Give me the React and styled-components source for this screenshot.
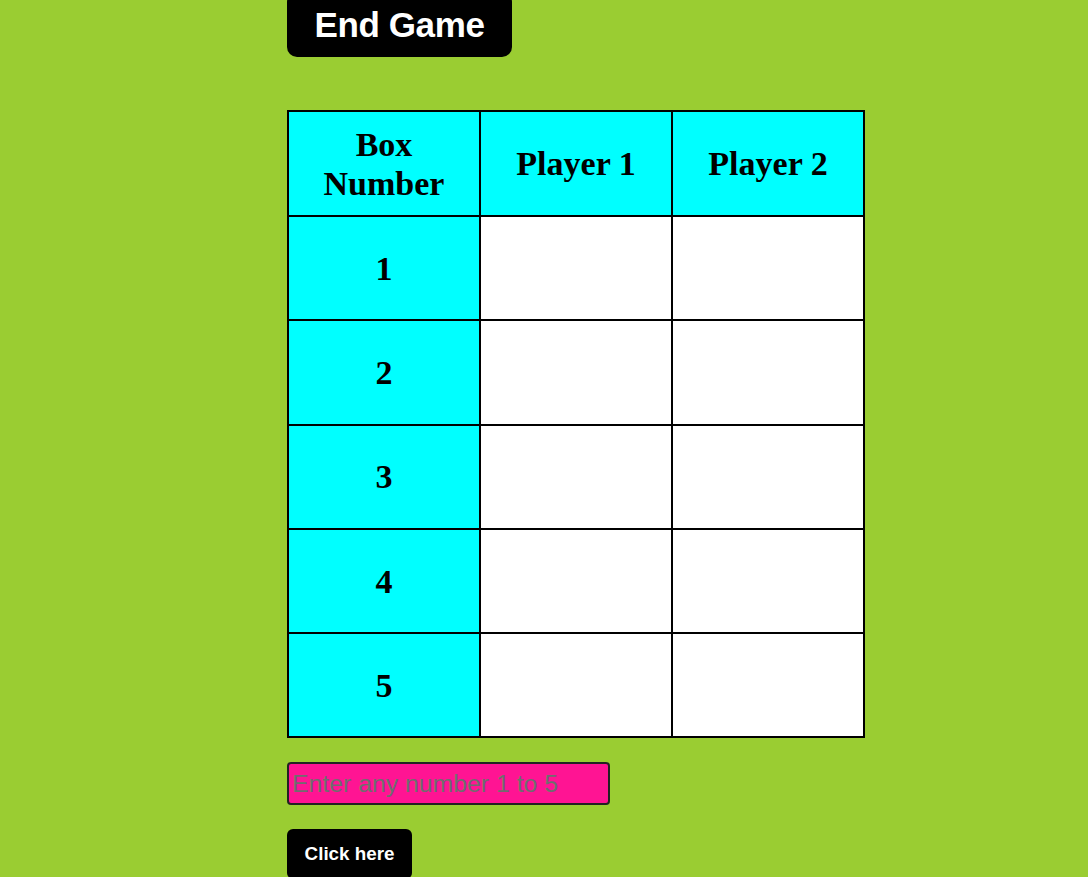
import React from "react";
import styled, { createGlobalStyle } from "styled-components";

const Global = createGlobalStyle`
  html, body { margin: 0; padding: 0; }
  body { background: #9acd32; font-family: "Liberation Serif", serif; }
`;

const Page = styled.div`
  display: flex;
  flex-direction: column;
  align-items: flex-start;
  padding-left: 287px;
  margin-top: -8px;
`;

const EndButton = styled.button`
  width: 225px;
  height: 65px;
  background: #000;
  color: #fff;
  border: none;
  border-radius: 10px;
  font-family: "Liberation Sans", Arial, sans-serif;
  font-weight: 700;
  font-size: 35px;
  letter-spacing: -0.4px;
  padding: 0;
  cursor: pointer;
`;

const Table = styled.table`
  margin-top: 53px;
  border-collapse: collapse;
  border: 2px solid #000;
  table-layout: fixed;
  width: 578px;
`;

const Cell = styled.td`
  border: 2px solid #000;
  height: ${(p) => (p.$top ? "103px" : "102.3px")};
  padding: 0;
  background: ${(p) => (p.$head ? "#00ffff" : "#ffffff")};
  text-align: center;
  vertical-align: middle;
  font-family: "Liberation Serif", "Times New Roman", serif;
  font-weight: 700;
  font-size: 34px;
  line-height: 39px;
  color: #000;
`;

const Input = styled.input`
  margin-top: 24px;
  width: 323px;
  height: 43px;
  box-sizing: border-box;
  background: #ff1493;
  border: 2px solid #222;
  border-radius: 4px;
  padding: 0 3px;
  font-family: "Liberation Sans", Arial, sans-serif;
  font-size: 24.8px;
  outline: none;
  &::placeholder { color: #6e6e6e; }
`;

const ClickButton = styled.button`
  margin-top: 24px;
  width: 125px;
  height: 50px;
  background: #000;
  color: #fff;
  border: none;
  border-radius: 6px;
  font-family: "Liberation Sans", Arial, sans-serif;
  font-weight: 700;
  font-size: 18.8px;
  padding: 0;
  cursor: pointer;
`;

const rows = [1, 2, 3, 4, 5];

export default function App() {
  return (
    <>
      <Global />
      <Page>
        <EndButton>End Game</EndButton>
        <Table>
          <tbody>
            <tr>
              <Cell as="th" $head $top>Box<br />Number</Cell>
              <Cell as="th" $head $top>Player 1</Cell>
              <Cell as="th" $head $top>Player 2</Cell>
            </tr>
            {rows.map((n) => (
              <tr key={n}>
                <Cell $head>{n}</Cell>
                <Cell />
                <Cell />
              </tr>
            ))}
          </tbody>
        </Table>
        <Input placeholder="Enter any number 1 to 5" />
        <ClickButton>Click here</ClickButton>
      </Page>
    </>
  );
}
